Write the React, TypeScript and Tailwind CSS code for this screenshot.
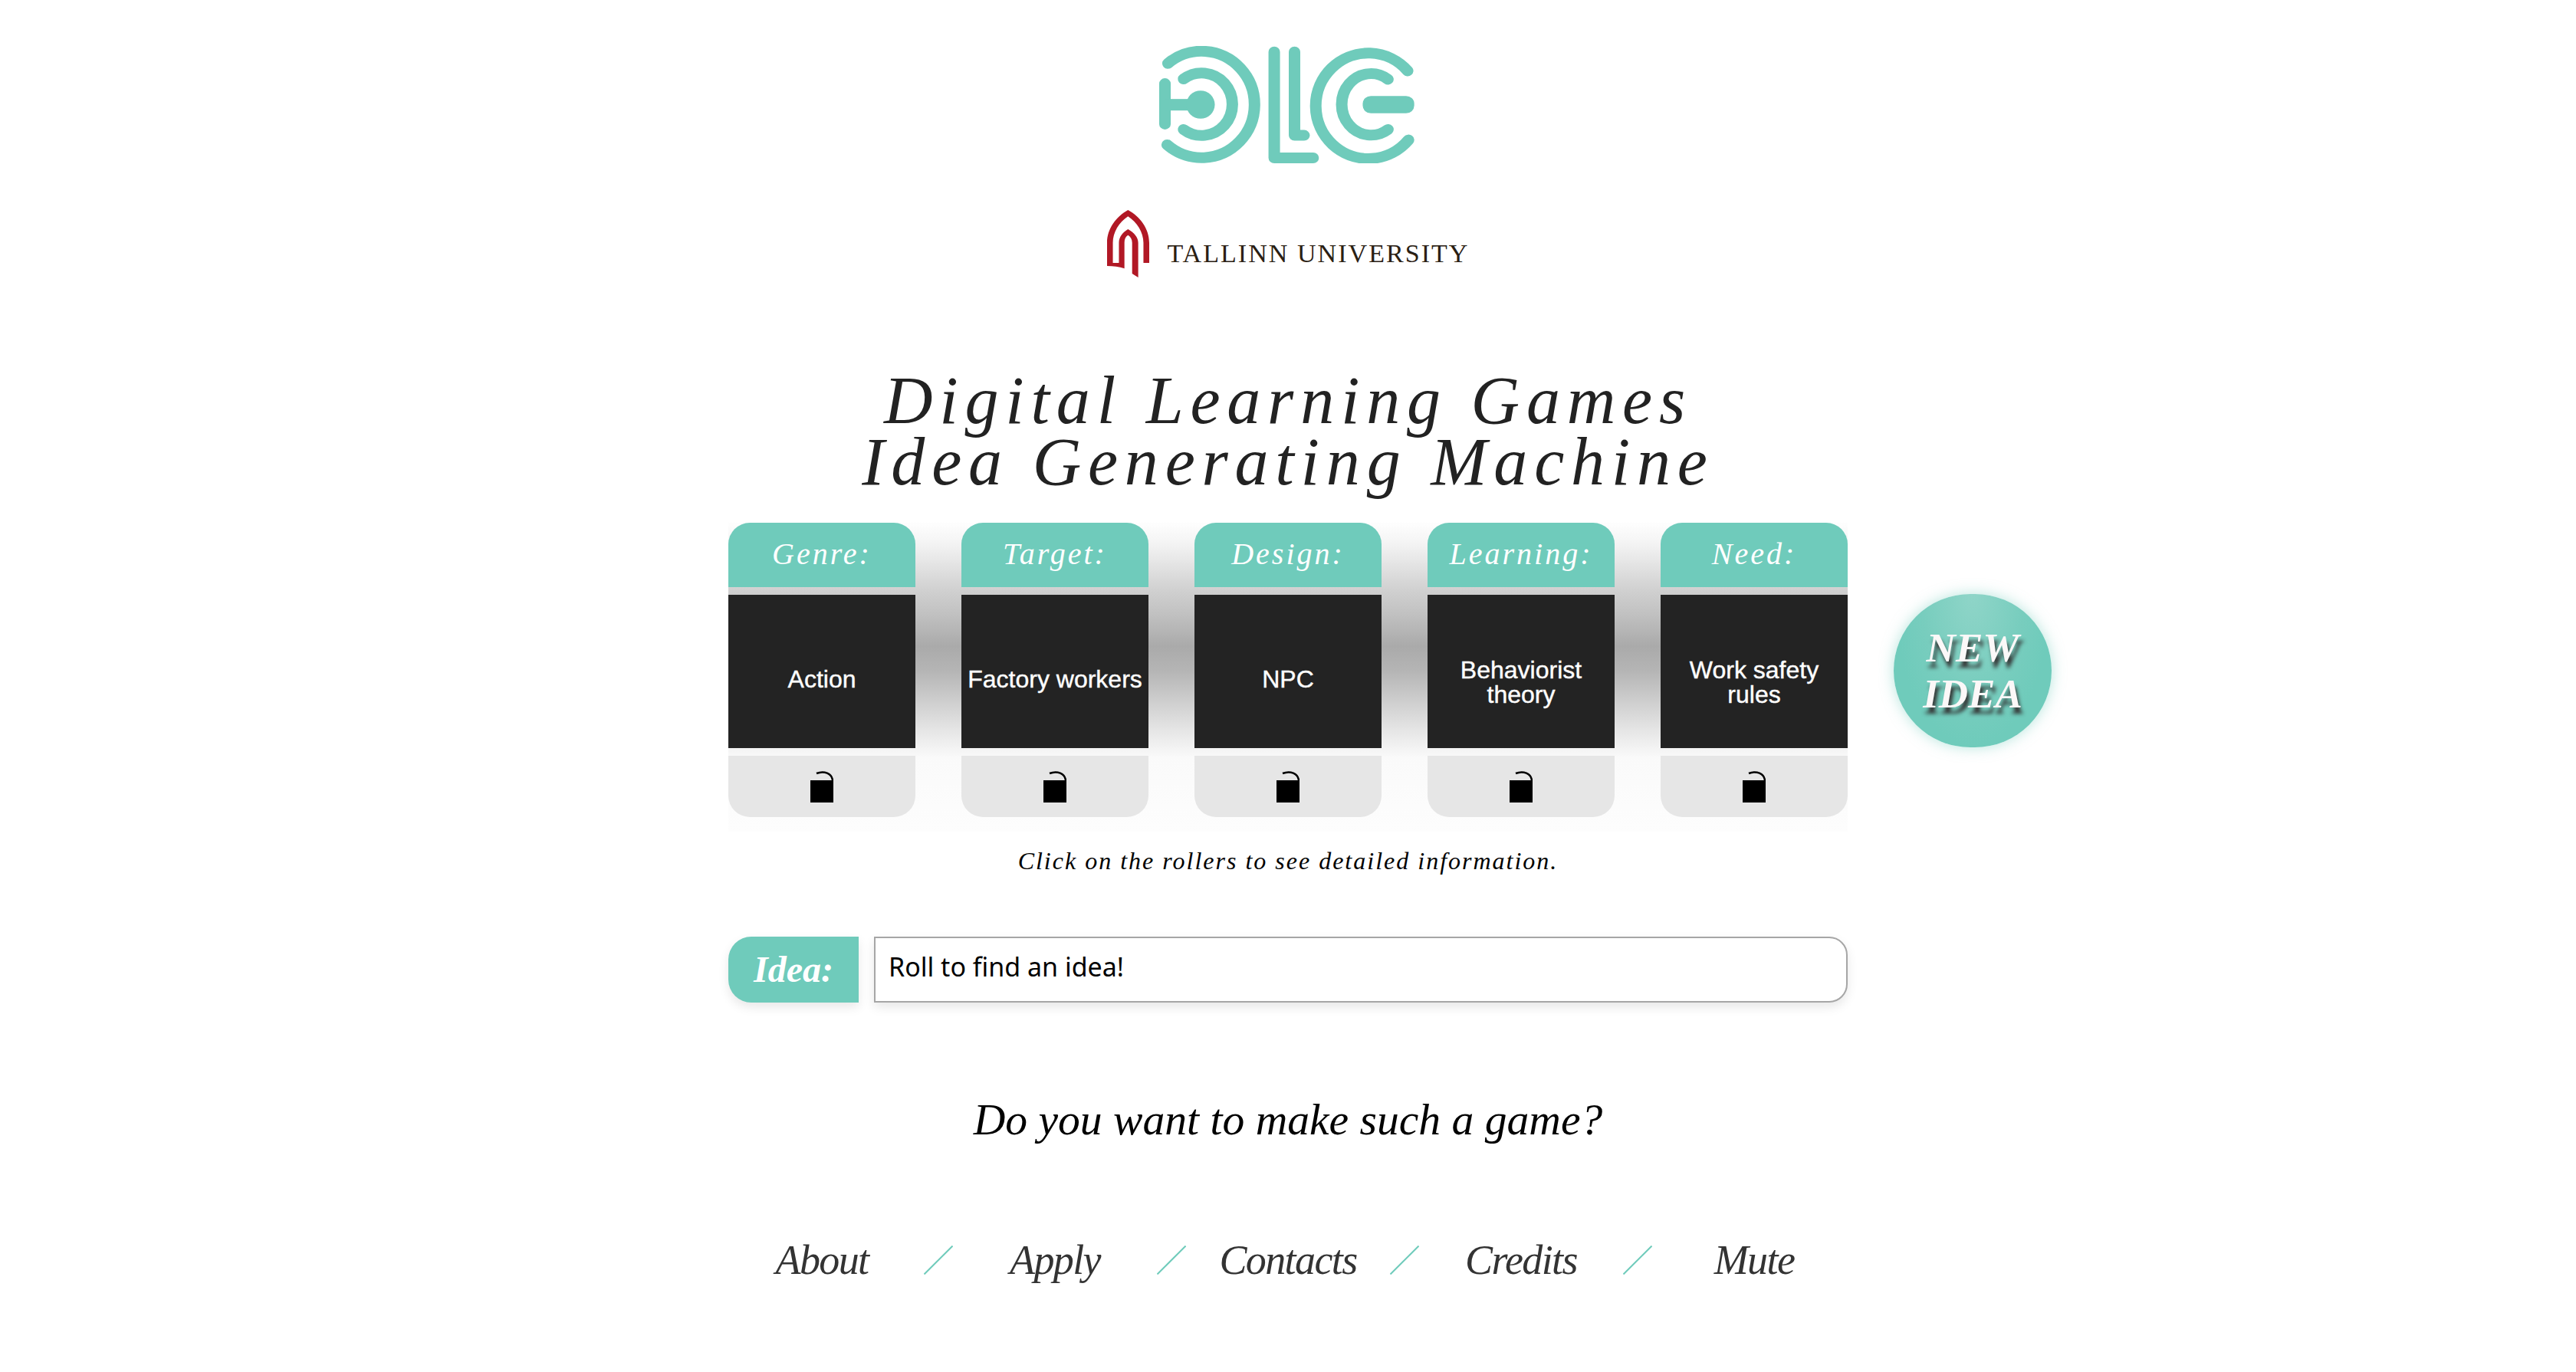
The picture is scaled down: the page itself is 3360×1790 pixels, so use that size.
const rollers = [
  { label: "Genre:", value: "Action", pad: "pt-[20px]" },
  { label: "Target:", value: "Factory workers", pad: "pt-[20px]" },
  { label: "Design:", value: "NPC", pad: "pt-[20px]" },
  { label: "Learning:", value: "Behaviorist theory", pad: "pt-[28px] px-[30px]" },
  { label: "Need:", value: "Work safety rules", pad: "pt-[28px] px-[30px]" },
];

const links = ["About", "Apply", "Contacts", "Credits", "Mute"];

const DlcLogo = () => (
  <svg viewBox="315 90 932 458" preserveAspectRatio="none" className="w-[333px] h-[153px]">
    <g fill="none" stroke="#6fcbbb" strokeWidth="42" strokeLinecap="round" strokeLinejoin="round">
      <path d="M347 158 A193 208 0 1 1 344 476" />
      <path d="M404 219 A112 122 0 1 1 404 416" />
      <path d="M336 237 V395" />
      <path d="M735 113 V527 H877" />
      <path d="M809 113 V439 H844" />
      <path d="M1222 187 A192 206 0 1 0 1225 457" />
      <path d="M1150 220 A107 120 0 1 0 1150 416" />
    </g>
    <rect x="336" y="297" width="100" height="45" fill="#6fcbbb" />
    <ellipse cx="466" cy="319" rx="52" ry="55" fill="#6fcbbb" />
    <rect x="1058" y="285" width="188" height="68" rx="30" fill="#6fcbbb" />
  </svg>
);

const TallinnMark = () => (
  <svg viewBox="127 732 153 263" preserveAspectRatio="none" className="w-[55px] h-[88px] shrink-0">
    <path
      fill="#b11825"
      d="M127 950 V860 C127 805 160 758 203 732 C247 758 280 805 280 860 V938 H259 V860 C259 820 236 780 203 757 C170 780 148 820 148 860 V938 H170 V860 C170 838 183 820 203 807 C224 820 240 838 240 860 V995 L218 980 V860 C218 846 212 836 203 830 C194 836 190 846 190 860 V960 C170 953 150 950 127 950 Z"
    />
  </svg>
);

const Lock = () => (
  <svg viewBox="0 0 30 41" className="w-[30px] h-[41px]">
    <rect x="0" y="12" width="30" height="29" fill="#000" />
    <path d="M8 3 C18 -1 28 3 29 12" fill="none" stroke="#000" strokeWidth="2.5" />
  </svg>
);

const Slash = () => (
  <svg viewBox="0 0 38 38" className="w-[38px] h-[38px]">
    <path d="M0.5 37.5 L37.5 0.5" stroke="#6fcbbb" strokeWidth="2" fill="none" />
  </svg>
);

const Roller = ({ label, value, pad }: { label: string; value: string; pad: string }) => (
  <div className="w-[244px] shrink-0 flex flex-col gap-[10px]">
    <div className="h-[84px] pb-[2px] bg-[#6fcbbb] rounded-t-[28px] flex items-center justify-center text-white font-['Liberation_Serif',serif] italic text-[40px] tracking-[3px]">
      {label}
    </div>
    <div className={`h-[200px] bg-[#232323] flex items-center justify-center text-center text-white font-['Liberation_Sans',sans-serif] text-[32px] leading-[32px] [-webkit-text-stroke:0.4px_white] ${pad}`}>
      {value}
    </div>
    <div className="h-[80px] bg-[#e6e6e6] rounded-b-[28px] flex items-center justify-center">
      <Lock />
    </div>
  </div>
);

export default function App() {
  return (
    <div className="min-h-screen bg-white flex flex-col items-center font-['Liberation_Serif',serif]">
      <div className="mt-[60px] mr-[3px]">
        <DlcLogo />
      </div>

      <div className="mt-[61px] flex items-start gap-[24px]">
        <TallinnMark />
        <span className="mt-[40px] text-[34px] leading-[34px] tracking-[2.05px] text-[#2a2013]">
          TALLINN UNIVERSITY
        </span>
      </div>

      <h1 className="mt-[121px] text-center italic font-normal text-[88px] leading-[80px] tracking-[8.8px] text-[#222]">
        Digital Learning Games
        <br />
        Idea Generating Machine
      </h1>

      <div className="mt-[39px] w-[1460px] h-[403px] flex items-start gap-[60px] bg-[linear-gradient(180deg,#fefefe_0%,#f5f5f5_6%,#e5e5e5_13%,#d2d2d2_21%,#c0c0c0_30%,#aaaaaa_40%,#b5b5b5_48%,#cccccc_57%,#e5e5e5_67%,#f3f3f3_73%,#fafafa_76%,#fdfdfd_100%)]">
        {rollers.map((r) => (
          <Roller key={r.label} {...r} />
        ))}
        <button className="shrink-0 mt-[93px] w-[206px] h-[200px] rounded-full bg-[radial-gradient(ellipse_at_50%_0%,#8fd5c8_0%,#78cdbe_45%,#6fcbbb_70%)] shadow-[0_0_18px_#6fcbbb80] italic font-bold text-[53px] leading-[60px] text-[#fbf8f8] [text-shadow:3px_8px_5px_#333]">
          NEW
          <br />
          IDEA
        </button>
      </div>

      <p className="mt-[18px] italic text-[32px] leading-[40px] tracking-[2px] text-black">
        Click on the rollers to see detailed information.
      </p>

      <div className="mt-[79px] w-[1460px] h-[86px] flex gap-[20px]">
        <div className="w-[170px] bg-[#6fcbbb] rounded-l-[30px] flex items-center justify-center italic font-bold text-[48px] text-white shadow-[0_6px_14px_#00000018]">
          Idea:
        </div>
        <div className="flex-1 bg-white border-2 border-[#a6a6a6] rounded-r-[24px] flex items-center pl-[17px] pb-[8px] font-['Noto_Sans',sans-serif] text-[34px] text-black shadow-[0_6px_14px_#00000018]">
          Roll to find an idea!
        </div>
      </div>

      <p className="mt-[118px] italic text-[57.6px] leading-[70px] text-black">
        Do you want to make such a game?
      </p>

      <nav className="mt-[118px] w-[1460px] flex items-center">
        {links.map((link, i) => (
          <div key={link} className="flex items-center">
            <a className="w-[244px] text-center italic text-[54px] leading-[60px] tracking-[-1.6px] text-[#333]">{link}</a>
            {i < links.length - 1 && (
              <span className="w-[60px] flex justify-center">
                <Slash />
              </span>
            )}
          </div>
        ))}
      </nav>
    </div>
  );
}
